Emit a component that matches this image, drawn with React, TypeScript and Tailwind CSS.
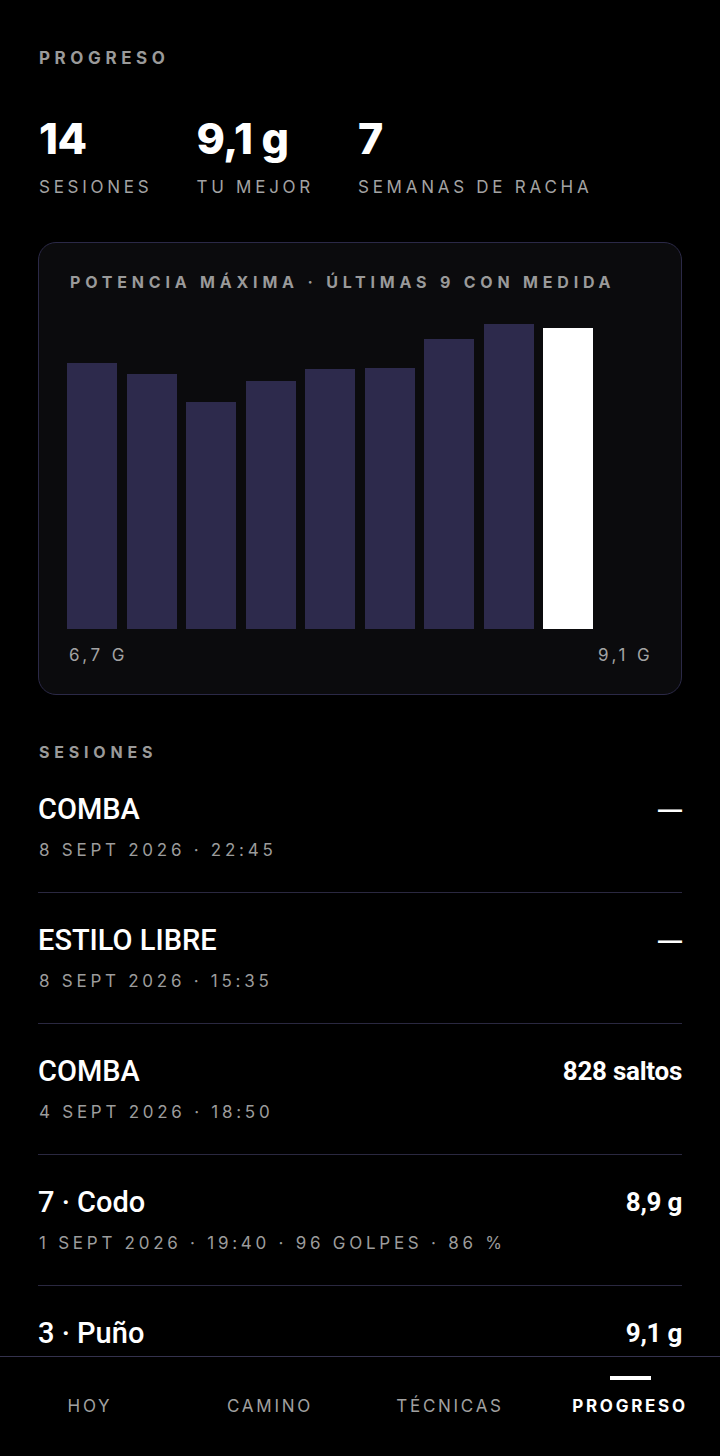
import React from "react";

const bars = [266, 255, 227, 248, 260, 261, 290, 305, 301];

const sessions = [
  { title: "COMBA", date: "8 SEPT 2026 · 22:45", value: "—" },
  { title: "ESTILO LIBRE", date: "8 SEPT 2026 · 15:35", value: "—" },
  { title: "COMBA", date: "4 SEPT 2026 · 18:50", value: "828 saltos" },
  { title: "7 · Codo", date: "1 SEPT 2026 · 19:40 · 96 GOLPES · 86 %", value: "8,9 g" },
  { title: "3 · Puño", date: "1 SEPT 2026 · 19:10 · 120 GOLPES · 90 %", value: "9,1 g" },
];

const stats = [
  ["14", "SESIONES"],
  ["9,1 g", "TU MEJOR"],
  ["7", "SEMANAS DE RACHA"],
];

const tabs = ["HOY", "CAMINO", "TÉCNICAS", "PROGRESO"];

export default function App() {
  return (
    <div className="w-[720px] h-[1456px] bg-black flex flex-col overflow-hidden text-white font-[family-name:Inter,'Noto_Sans',sans-serif]">
      <main className="flex-1 overflow-hidden px-[38px] pt-[48px]">
        <h1 className="pl-[1px] text-[17px] leading-[20px] font-bold tracking-[0.27em] text-[#9a9a9a]">
          PROGRESO
        </h1>
        <div className="mt-[48px] flex gap-[44px] pl-[1px]">
          {stats.map(([n, l]) => (
            <div key={l}>
              <div className="text-[43px] leading-[44px] font-extrabold tracking-[-0.01em] text-white">{n}</div>
              <div className="mt-[17px] text-[17px] leading-[20px] tracking-[0.22em] text-[#a3a3a3]">{l}</div>
            </div>
          ))}
        </div>

        <section className="mt-[45px] h-[453px] rounded-[18px] border border-[#2b2947] bg-[#0b0b0d] px-[28px] pt-[29px] flex flex-col">
          <div className="pl-[3px] text-[16px] leading-[20px] font-bold tracking-[0.3em] text-[#9a9a9a] whitespace-nowrap">
            POTENCIA MÁXIMA · ÚLTIMAS 9 CON MEDIDA
          </div>
          <div className="mt-[27px] h-[310px] flex items-end gap-[9.5px]">
            {bars.map((h, i) => (
              <div
                key={i}
                className={i === bars.length - 1 ? "w-[50px] bg-white" : "w-[50px] bg-[#2d2a4c]"}
                style={{ height: h }}
              />
            ))}
          </div>
          <div className="mt-[16px] flex justify-between pl-[2px] text-[17px] leading-[20px] tracking-[0.2em] text-[#a3a3a3]">
            <span>6,7 G</span>
            <span>9,1 G</span>
          </div>
        </section>

        <h2 className="mt-[47px] pl-[1px] text-[16px] leading-[20px] font-bold tracking-[0.3em] text-[#9a9a9a]">
          SESIONES
        </h2>
        <ul>
          {sessions.map((s, i) => (
            <li key={i} className="pt-[31px] pb-[32px] border-b border-[#2a2840]">
              <div className="flex items-center justify-between font-[family-name:Roboto,'Liberation_Sans',Arial,sans-serif]">
                <span className="text-[29px] leading-[32px] font-medium tracking-normal text-white">{s.title}</span>
                {s.value === "—" ? (
                  <span className="font-[family-name:'Liberation_Sans',Arial,sans-serif] text-[24px] leading-[32px] font-bold text-white">
                    —
                  </span>
                ) : (
                  <span className="text-[26px] leading-[32px] font-bold tracking-[-0.01em] text-white">{s.value}</span>
                )}
              </div>
              <div className="mt-[15px] pl-[1px] text-[17px] leading-[20px] tracking-[0.22em] text-[#9c9c9c]">
                {s.date}
              </div>
            </li>
          ))}
        </ul>
      </main>

      <nav className="h-[100px] shrink-0 border-t border-[#34324d] bg-black grid grid-cols-4">
        {tabs.map((t, i) => {
          const active = i === 3;
          return (
            <div key={t} className="flex flex-col items-center pt-[19px]">
              <div className={active ? "h-[4px] w-[41px] bg-white" : "h-[4px] w-[41px] bg-transparent"} />
              <div
                className={
                  active
                    ? "mt-[16px] text-[17px] leading-[20px] font-bold tracking-[0.16em] text-white"
                    : "mt-[16px] text-[17px] leading-[20px] tracking-[0.16em] text-[#a0a0a0]"
                }
              >
                {t}
              </div>
            </div>
          );
        })}
      </nav>
    </div>
  );
}
